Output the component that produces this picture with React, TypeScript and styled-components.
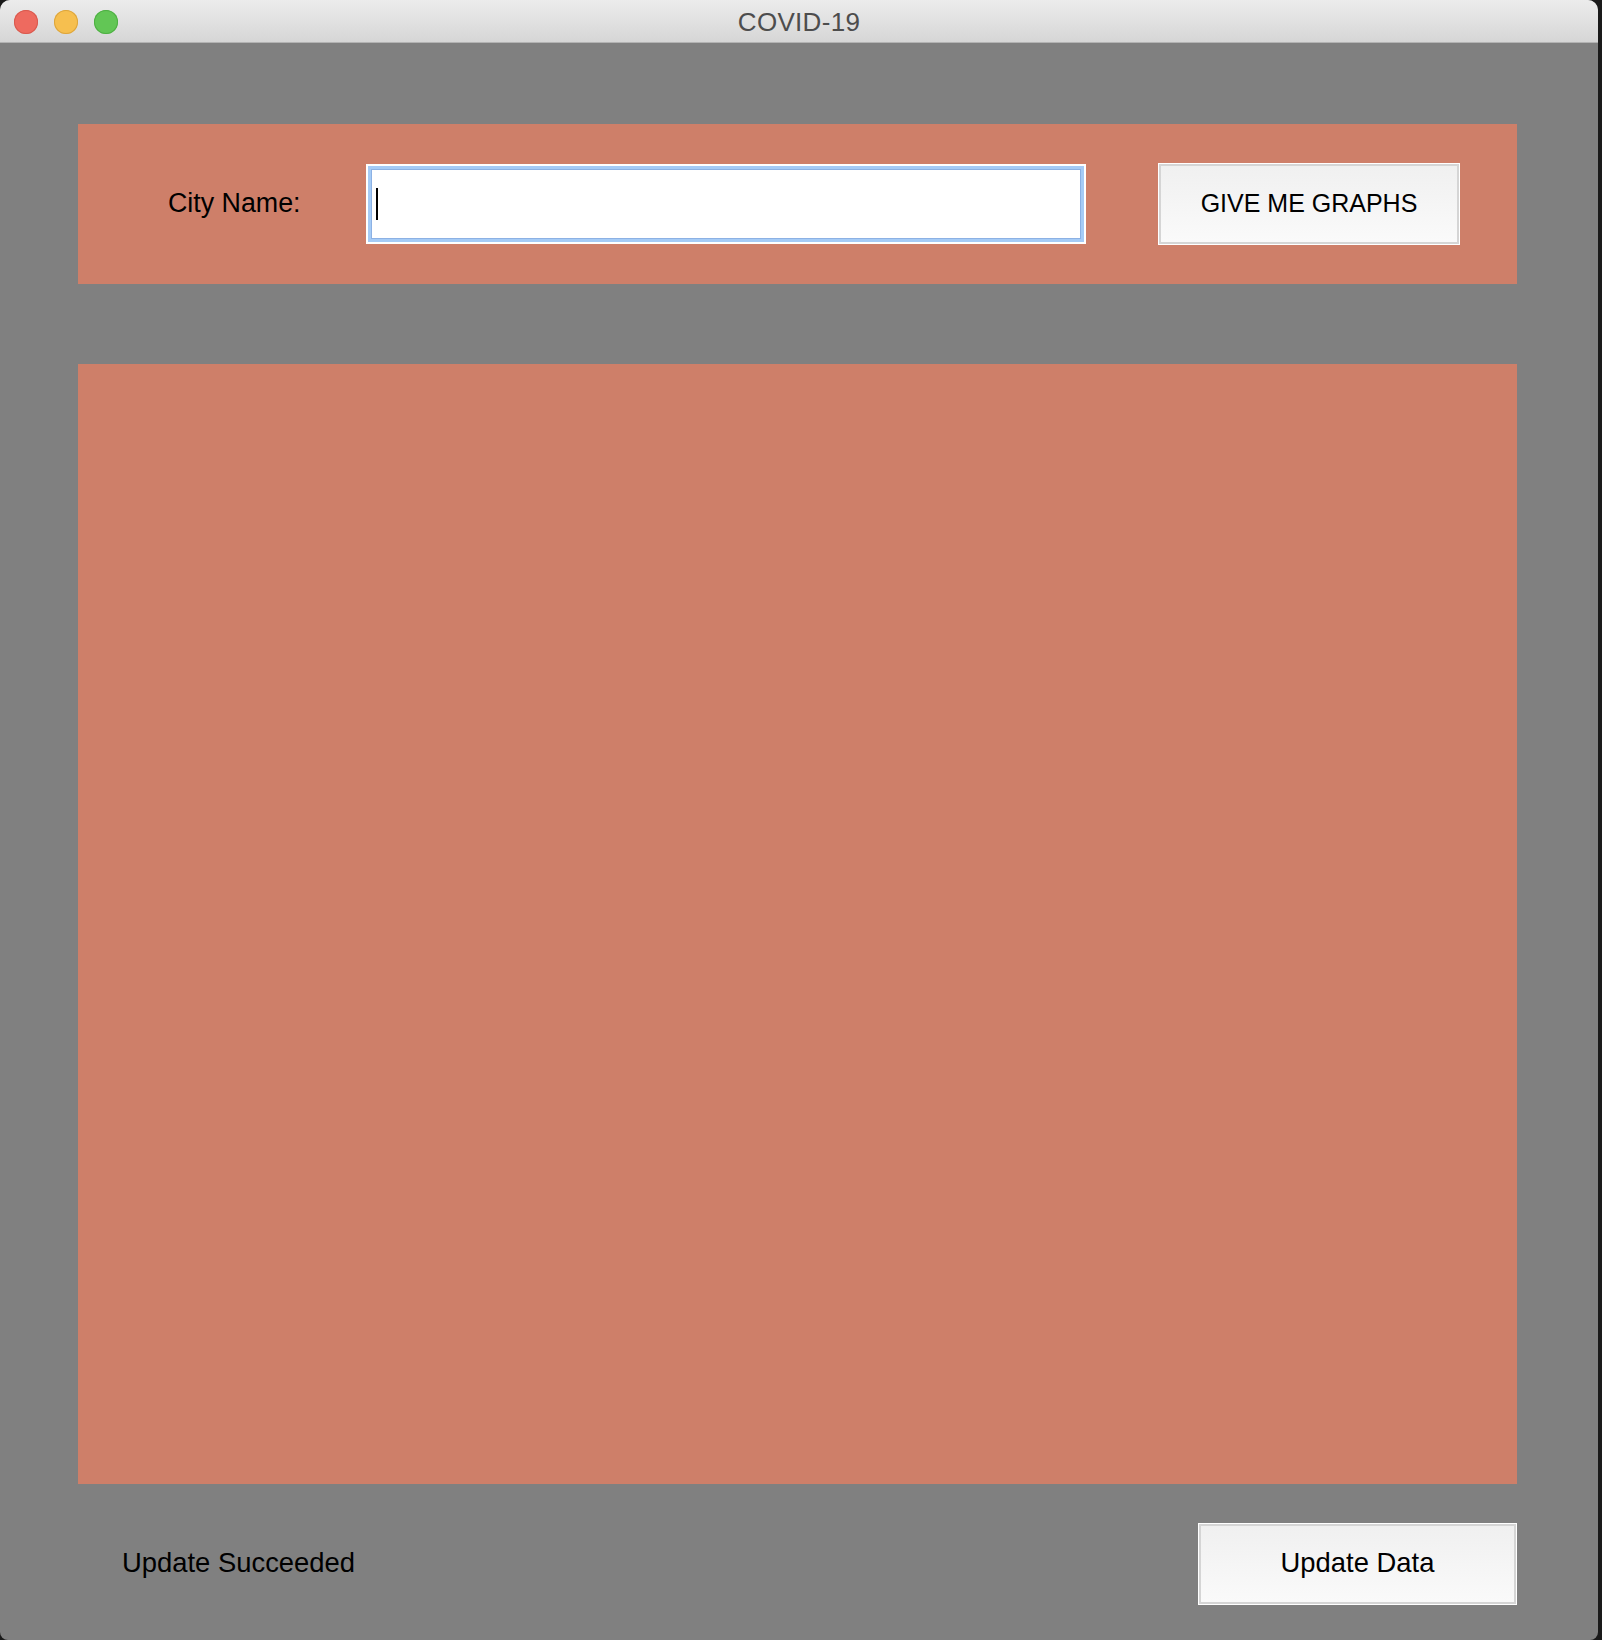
import React from "react";
import styled, { createGlobalStyle } from "styled-components";

const Global = createGlobalStyle`
  html, body { margin: 0; padding: 0; background: #1a1a1a; }
  body { font-family: "Liberation Sans", Arial, sans-serif; }
  #root { width: 1602px; height: 1640px; }
`;

const Screen = styled.div`
  display: flex;
  width: 1602px;
  height: 1640px;
  background: #1a1a1a;
  overflow: hidden;
`;

const Window = styled.div`
  width: 1598px;
  height: 1640px;
  flex: none;
  display: flex;
  flex-direction: column;
  background: #808080;
  border-radius: 10px 10px 8px 8px;
  overflow: hidden;
`;

const TitleBar = styled.div`
  position: relative;
  height: 42px;
  flex: none;
  display: flex;
  align-items: center;
  justify-content: center;
  background: linear-gradient(#ececec, #d6d6d6);
  border-bottom: 1px solid #b3b3b3;
`;

const Lights = styled.div`
  position: absolute;
  left: 14px;
  top: 10px;
  display: flex;
  gap: 16px;
`;

const Light = styled.span<{ $c: string; $b: string }>`
  width: 24px;
  height: 24px;
  border-radius: 50%;
  background: ${(p) => p.$c};
  box-shadow: inset 0 0 0 1px ${(p) => p.$b};
`;

const Title = styled.div`
  font-size: 26px;
  color: #4d4d4d;
  letter-spacing: 0.3px;
  margin-top: 2px;
`;

const Content = styled.div`
  flex: 1;
  display: flex;
  flex-direction: column;
  padding: 81px 81px 0 78px;
`;

const Panel = styled.div`
  background: #ce7f69;
`;

const SearchPanel = styled(Panel)`
  height: 160px;
  display: flex;
  align-items: center;
  padding: 0 57px 0 90px;
  margin-bottom: 80px;
`;

const Label = styled.div`
  width: 198px;
  flex: none;
  font-size: 26.8px;
  color: #000;
  margin-top: -2px;
`;

const InputFrame = styled.div`
  width: 720px;
  height: 80px;
  box-sizing: border-box;
  border: 2px solid #ffffff;
  background: #a5cbf6;
  padding: 3px;
  flex: none;
`;

const InputInner = styled.div`
  width: 100%;
  height: 100%;
  box-sizing: border-box;
  background: #fff;
  border: 1px solid #8cb1e4;
  display: flex;
  align-items: center;
  padding-left: 4px;
`;

const Caret = styled.span`
  width: 2px;
  height: 32px;
  background: #000;
`;

const Spacer = styled.div`
  flex: 1;
`;

const Button = styled.button<{ $w: number; $size: number }>`
  width: ${(p) => p.$w}px;
  height: 80px;
  flex: none;
  box-sizing: border-box;
  border: 2px solid #d5d5d5;
  box-shadow: 0 0 0 1px #fff;
  background: linear-gradient(#f0f0f0, #fafafa);
  font-family: "Liberation Sans", Arial, sans-serif;
  font-size: ${(p) => p.$size}px;
  color: #000;
  padding: 0 0 2px;
  margin: 1px;
`;

const GraphPanel = styled(Panel)`
  height: 1120px;
`;

const StatusRow = styled.div`
  display: flex;
  align-items: center;
  justify-content: space-between;
  padding: 39px 0 0 44px;
`;

const Status = styled.div`
  font-size: 27.4px;
  color: #000;
  margin-top: -2px;
`;

export default function App() {
  return (
    <>
      <Global />
      <Screen>
        <Window>
          <TitleBar>
            <Lights>
              <Light $c="#ee6a5f" $b="#d85a4f" />
              <Light $c="#f6bf4f" $b="#dca53d" />
              <Light $c="#62c655" $b="#4eaf43" />
            </Lights>
            <Title>COVID-19</Title>
          </TitleBar>
          <Content>
            <SearchPanel>
              <Label>City Name:</Label>
              <InputFrame>
                <InputInner>
                  <Caret />
                </InputInner>
              </InputFrame>
              <Spacer />
              <Button $w={300} $size={25}>GIVE ME GRAPHS</Button>
            </SearchPanel>
            <GraphPanel />
            <StatusRow>
              <Status>Update Succeeded</Status>
              <Button $w={317} $size={27.4}>Update Data</Button>
            </StatusRow>
          </Content>
        </Window>
      </Screen>
    </>
  );
}
